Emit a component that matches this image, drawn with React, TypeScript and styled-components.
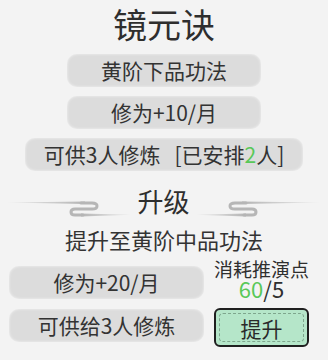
import React from "react";
import styled, { createGlobalStyle } from "styled-components";

const GlobalStyle = createGlobalStyle`
  html, body {
    margin: 0;
    padding: 0;
    background: #f3f3f3;
  }
  body {
    font-family: "Noto Sans CJK SC", "Noto Sans", sans-serif;
    color: #333333;
  }
`;

const Page = styled.div`
  width: 328px;
  height: 360px;
  display: flex;
  flex-direction: column;
  align-items: stretch;
  overflow: hidden;
`;

const Title = styled.h1`
  margin: 0;
  height: 48px;
  line-height: 48px;
  font-size: 34px;
  font-weight: 400;
  text-align: center;
  color: #2e2e2e;
`;

const InfoList = styled.div`
  margin-top: 6px;
  display: flex;
  flex-direction: column;
  align-items: center;
  gap: 9px;
`;

const Pill = styled.div<{ $w: number }>`
  width: ${(p) => p.$w}px;
  height: 33px;
  border-radius: 10px;
  background: #dcdcdc;
  box-shadow: inset 0 0 3px rgba(255, 255, 255, 0.7);
  display: flex;
  align-items: center;
  justify-content: center;
  font-size: 21px;
  line-height: 33px;
  color: #333333;
  white-space: nowrap;
`;

const Green = styled.span`
  color: #58c858;
`;

const Bracket = styled.span`
  margin-left: 14px;
`;

const DividerRow = styled.div`
  margin-top: 15px;
  height: 30px;
  display: flex;
  align-items: flex-start;
  justify-content: center;
  padding: 0 8px 0 7px;
`;

const DividerTitle = styled.div`
  font-size: 26px;
  line-height: 30px;
  width: 66px;
  text-align: center;
  color: #2e2e2e;
`;

const Ornament = styled.svg<{ $flip?: boolean }>`
  margin-top: 14px;
  width: 124px;
  height: 18px;
  flex: none;
  transform: ${(p) => (p.$flip ? "scaleX(-1)" : "none")};
`;

const Subtitle = styled.div`
  margin-top: 8px;
  font-size: 22px;
  line-height: 30px;
  text-align: center;
  color: #333333;
`;

const BottomRow = styled.div`
  margin-top: 5px;
  display: flex;
  align-items: flex-start;
  padding-left: 9px;
  gap: 10px;
`;

const LeftCol = styled.div`
  margin-top: 7px;
  display: flex;
  flex-direction: column;
  gap: 10px;
`;

const RightCol = styled.div`
  margin-top: 1px;
  width: 95px;
  display: flex;
  flex-direction: column;
  align-items: center;
`;

const CostLabel = styled.div`
  font-size: 19px;
  line-height: 18px;
  color: #2e2e2e;
  white-space: nowrap;
`;

const CostValue = styled.div`
  font-size: 22px;
  line-height: 20px;
  color: #2e2e2e;
`;

const UpgradeButton = styled.button`
  margin-top: 10px;
  position: relative;
  width: 95px;
  height: 39px;
  border: 2px solid #1f1f1f;
  border-radius: 6px;
  background: #b5e6c9;
  font-family: "Noto Sans CJK SC", "Noto Sans", sans-serif;
  font-size: 21px;
  color: #2a2a2a;
  padding: 0;
  cursor: pointer;
  &::after {
    content: "";
    position: absolute;
    inset: 3px;
    border: 1px dashed rgba(60, 90, 70, 0.45);
    border-radius: 4px;
    pointer-events: none;
  }
`;

const OrnamentSvg: React.FC<{ flip?: boolean }> = ({ flip }) => (
  <Ornament $flip={flip} viewBox="0 0 124 18">
    <defs>
      <linearGradient id={flip ? "gr" : "gl"} x1="0" x2="1" y1="0" y2="0">
        <stop offset="0" stopColor="#c8c8c8" stopOpacity="0.3" />
        <stop offset="1" stopColor="#b4b4b4" />
      </linearGradient>
      <linearGradient id={flip ? "gr2" : "gl2"} x1="0" x2="1" y1="0" y2="0">
        <stop offset="0" stopColor="#b4b4b4" />
        <stop offset="1" stopColor="#c8c8c8" stopOpacity="0.3" />
      </linearGradient>
    </defs>
    <path d="M0 2.6 L78 1.6 L78 4 Z" fill={`url(#${flip ? "gr" : "gl"})`} />
    <path
      d="M74 3 H85 Q90 3 90 6 Q90 9 85 9 H68 Q64 9 64 12 Q64 15 68 15 H76"
      fill="none"
      stroke="#b6b6b6"
      strokeWidth="3"
      strokeLinecap="round"
    />
    <path d="M74 13.6 L124 14.8 L74 16.4 Z" fill={`url(#${flip ? "gr2" : "gl2"})`} />
  </Ornament>
);

export default function App() {
  return (
    <>
      <GlobalStyle />
      <Page>
        <Title>镜元诀</Title>
        <InfoList>
          <Pill $w={194}>黄阶下品功法</Pill>
          <Pill $w={194}>修为+10/月</Pill>
          <Pill $w={278}>
            可供3人修炼
            <Bracket>[已安排<Green>2</Green>人]</Bracket>
          </Pill>
        </InfoList>
        <DividerRow>
          <OrnamentSvg />
          <DividerTitle>升级</DividerTitle>
          <OrnamentSvg flip />
        </DividerRow>
        <Subtitle>提升至黄阶中品功法</Subtitle>
        <BottomRow>
          <LeftCol>
            <Pill $w={195}>修为+20/月</Pill>
            <Pill $w={195}>可供给3人修炼</Pill>
          </LeftCol>
          <RightCol>
            <CostLabel>消耗推演点</CostLabel>
            <CostValue>
              <Green>60</Green>/5
            </CostValue>
            <UpgradeButton>提升</UpgradeButton>
          </RightCol>
        </BottomRow>
      </Page>
    </>
  );
}
